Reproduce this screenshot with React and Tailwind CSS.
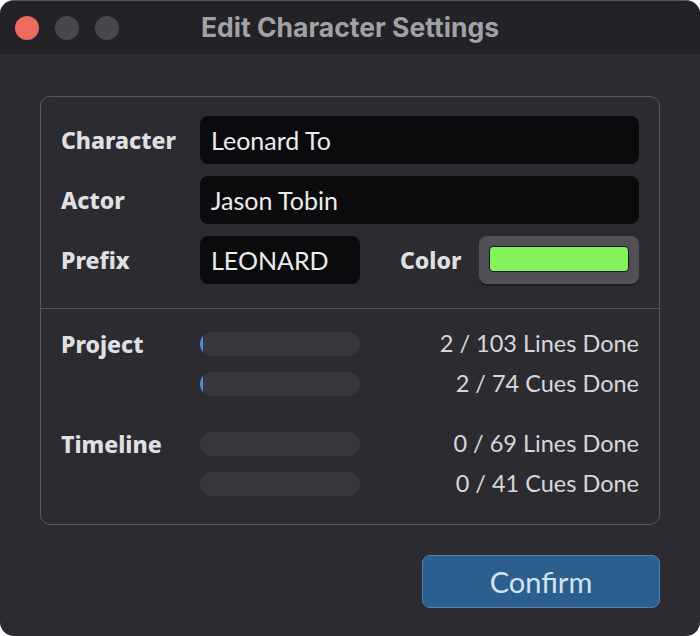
const labelCls = "text-[23px] font-extrabold text-[#e0e0e3] leading-none";
const labelFont = { fontFamily: "'Noto Sans', 'Open Sans', sans-serif" };

const ProgressRow = ({ label, done, total, unit }) => (
  <div className="flex items-center h-6">
    <div className={`w-[139px] ${labelCls}`} style={labelFont}>{label}</div>
    <div className="relative w-[160px] h-6 rounded-full bg-[#38373d] overflow-hidden">
      {done > 0 && (
        <div className="absolute left-0 top-0 h-full w-[3px] rounded-full bg-[#4a8fd8]" />
      )}
    </div>
    <div className="flex-1 text-right text-[23.5px] leading-none text-[#d8d8dc]">
      {done} / {total} {unit} Done
    </div>
  </div>
);

const Field = ({ children, className = "" }) => (
  <div className={`h-12 rounded-lg bg-[#0b0b0d] flex items-center px-[11px] text-[25px] leading-none text-[#ececee] ${className}`}>
    {children}
  </div>
);

export default function App() {
  return (
    <div className="w-[700px] h-[636px] bg-white" style={{ fontFamily: "Lato, 'Noto Sans', sans-serif" }}>
      <div className="w-full h-full rounded-[14px] overflow-hidden bg-[#2c2b31] flex flex-col border-t border-[#55555a]">
        {/* title bar */}
        <div className="h-[53px] bg-[#232227] flex items-center relative">
          <div className="flex gap-4 pl-[15px]">
            <span className="w-6 h-6 rounded-full bg-[#ec6a5e]" />
            <span className="w-6 h-6 rounded-full bg-[#48474c]" />
            <span className="w-6 h-6 rounded-full bg-[#48474c]" />
          </div>
          <div
            className="absolute inset-0 flex items-center justify-center text-[26.5px] font-bold text-[#a2a2a6]"
            style={{ fontFamily: "Inter, sans-serif" }}
          >
            Edit Character Settings
          </div>
        </div>

        {/* body */}
        <div className="flex-1 px-10 pt-[42px] flex flex-col">
          <div className="border-[1.5px] border-[#58575d] rounded-[10px]">
            <div className="px-5 pt-[19px] pb-6 flex flex-col gap-3">
              <div className="flex items-center">
                <div className={`w-[139px] ${labelCls}`} style={labelFont}>Character</div>
                <Field className="flex-1">Leonard To</Field>
              </div>
              <div className="flex items-center">
                <div className={`w-[139px] ${labelCls}`} style={labelFont}>Actor</div>
                <Field className="flex-1">Jason Tobin</Field>
              </div>
              <div className="flex items-center">
                <div className={`w-[139px] ${labelCls}`} style={labelFont}>Prefix</div>
                <Field className="w-[160px]">LEONARD</Field>
                <div className={`flex-1 pl-10 ${labelCls}`} style={labelFont}>Color</div>
                <div className="w-[160px] h-12 rounded-lg bg-[#505055] shadow-[0_2px_0_#1c1b20] pt-[10px] px-[10px]">
                  <div className="h-[26px] rounded-[4px] bg-[#84f35c] border-[1.5px] border-[#111]" />
                </div>
              </div>
            </div>
            <div className="h-px bg-[#55545a]" />
            <div className="px-5 pt-[23px] pb-7 flex flex-col">
              <div className="flex flex-col gap-4">
                <ProgressRow label="Project" done={2} total={103} unit="Lines" />
                <ProgressRow label="" done={2} total={74} unit="Cues" />
              </div>
              <div className="flex flex-col gap-4 mt-9">
                <ProgressRow label="Timeline" done={0} total={69} unit="Lines" />
                <ProgressRow label="" done={0} total={41} unit="Cues" />
              </div>
            </div>
          </div>

          <div className="flex justify-end mt-[30px]">
            <button className="w-[238px] h-[53px] rounded-lg bg-[#2d5f8e] border-[1.5px] border-[#4c84b8] text-[29px] leading-none text-[#d5e3f0]">
              Confirm
            </button>
          </div>
        </div>
      </div>
    </div>
  );
}
